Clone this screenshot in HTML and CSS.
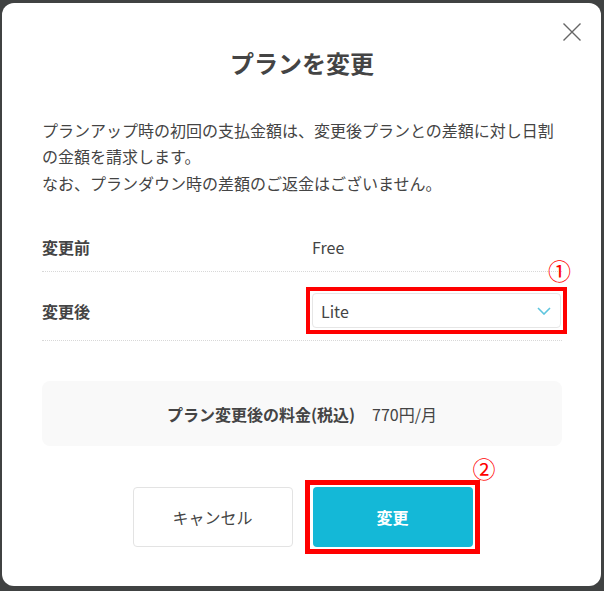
FILE: index.html
```html
<html>
<head>
    <link rel="stylesheet" href="styles.css">
</head>
<body>
    <div class="modal">
        <button class="close-button" aria-label="閉じる">
            <svg width="18" height="18" viewBox="0 0 18 18"><path d="M0.5 0.5L17.5 17.5M17.5 0.5L0.5 17.5" stroke="#666" stroke-width="1.4" fill="none"/></svg>
        </button>

        <h2 class="modal-title">プランを変更</h2>

        <p class="notice">プランアップ時の初回の支払金額は、変更後プランとの差額に対し日割の金額を請求します。<br>なお、プランダウン時の差額のご返金はございません。</p>

        <div class="plan-table">
            <div class="plan-row first">
                <div class="plan-label">変更前</div>
                <div class="plan-value">Free</div>
            </div>
            <div class="plan-row second">
                <div class="plan-label">変更後</div>
                <div class="plan-value">
                    <div class="select-wrap">
                        <div class="select-box">
                            <span>Lite</span>
                            <svg width="14" height="8" viewBox="0 0 14 8"><path d="M1 1L7 7L13 1" stroke="#5ec5de" stroke-width="1.6" fill="none"/></svg>
                        </div>
                        <div class="mark-box"></div>
                        <span class="mark-num one">①</span>
                    </div>
                </div>
            </div>
        </div>

        <div class="price-box">
            <span class="price-label">プラン変更後の料金(税込)</span>
            <span class="price-value">770円/月</span>
        </div>

        <div class="modal-buttons">
            <button class="btn btn-cancel">キャンセル</button>
            <div class="btn-wrap">
                <button class="btn btn-submit">変更</button>
                <div class="mark-box big"></div>
                <span class="mark-num two">②</span>
            </div>
        </div>
    </div>
</body>
</html>
```

FILE: styles.css
```css
body {
    margin: 0;
    background-color: #404242;
    font-family: "Noto Sans CJK JP", "Noto Sans", sans-serif;
    color: #444;
}

.modal {
    position: relative;
    box-sizing: border-box;
    width: 599px;
    height: 583px;
    margin: 3px 0 0 2px;
    padding: 43px 39px 0 40px;
    background-color: #fff;
    border-radius: 12px;
}

.close-button {
    position: absolute;
    top: 20px;
    left: 561px;
    width: 18px;
    height: 18px;
    padding: 0;
    border: none;
    background: transparent;
    cursor: pointer;
}

.close-button svg {
    display: block;
}

.modal-title {
    margin: 0;
    font-size: 24px;
    line-height: 34px;
    font-weight: bold;
    text-align: center;
    color: #444;
}

.notice {
    margin: 37px 0 0;
    font-size: 16px;
    line-height: 26.4px;
}

.plan-table {
    margin-top: 20px;
}

.plan-row {
    display: flex;
    align-items: center;
    border-bottom: 1px dotted #d8d8d8;
    font-size: 16px;
    line-height: 24px;
}

.plan-row.first {
    padding: 19px 0 12px;
}

.plan-row.second {
    padding: 21px 0 12px;
}

.plan-label {
    width: 270px;
    font-weight: bold;
}

.plan-value {
    flex: 1;
}

.select-wrap {
    position: relative;
    width: 249px;
}

.select-box {
    box-sizing: border-box;
    display: flex;
    align-items: center;
    justify-content: space-between;
    height: 35px;
    padding: 0 9px 0 8px;
    border: 1px solid #e6e6e6;
    border-radius: 4px;
}

.select-box svg {
    display: block;
}

.mark-box {
    position: absolute;
    top: -6px;
    left: -6px;
    right: -6px;
    bottom: -6px;
    border: 4px solid #f00;
    pointer-events: none;
}

.mark-box.big {
    top: -7px;
    left: -8px;
    right: -7px;
    bottom: -7px;
    border-width: 5px;
}

.mark-num {
    position: absolute;
    font-size: 23px;
    line-height: 23px;
    color: #f00;
}

.mark-num.one {
    top: -34px;
    left: 236px;
}

.mark-num.two {
    top: -30px;
    left: 160px;
}

.price-box {
    display: flex;
    align-items: center;
    justify-content: center;
    gap: 17px;
    height: 65px;
    margin-top: 40px;
    background-color: #f9f9f9;
    border-radius: 8px;
    font-size: 16px;
}

.price-label {
    font-weight: bold;
}

.modal-buttons {
    display: flex;
    justify-content: center;
    gap: 20px;
    margin-top: 41px;
    padding-left: 1px;
}

.btn-wrap {
    position: relative;
}

.btn {
    display: block;
    width: 160px;
    height: 60px;
    border-radius: 4px;
    font-family: "Noto Sans CJK JP", "Noto Sans", sans-serif;
    font-size: 16px;
    cursor: pointer;
}

.btn-cancel {
    background-color: #fff;
    border: 1px solid #e3e3e3;
    color: #444;
}

.btn-submit {
    background-color: #14b8d7;
    border: none;
    color: #fff;
    font-weight: bold;
}
```
